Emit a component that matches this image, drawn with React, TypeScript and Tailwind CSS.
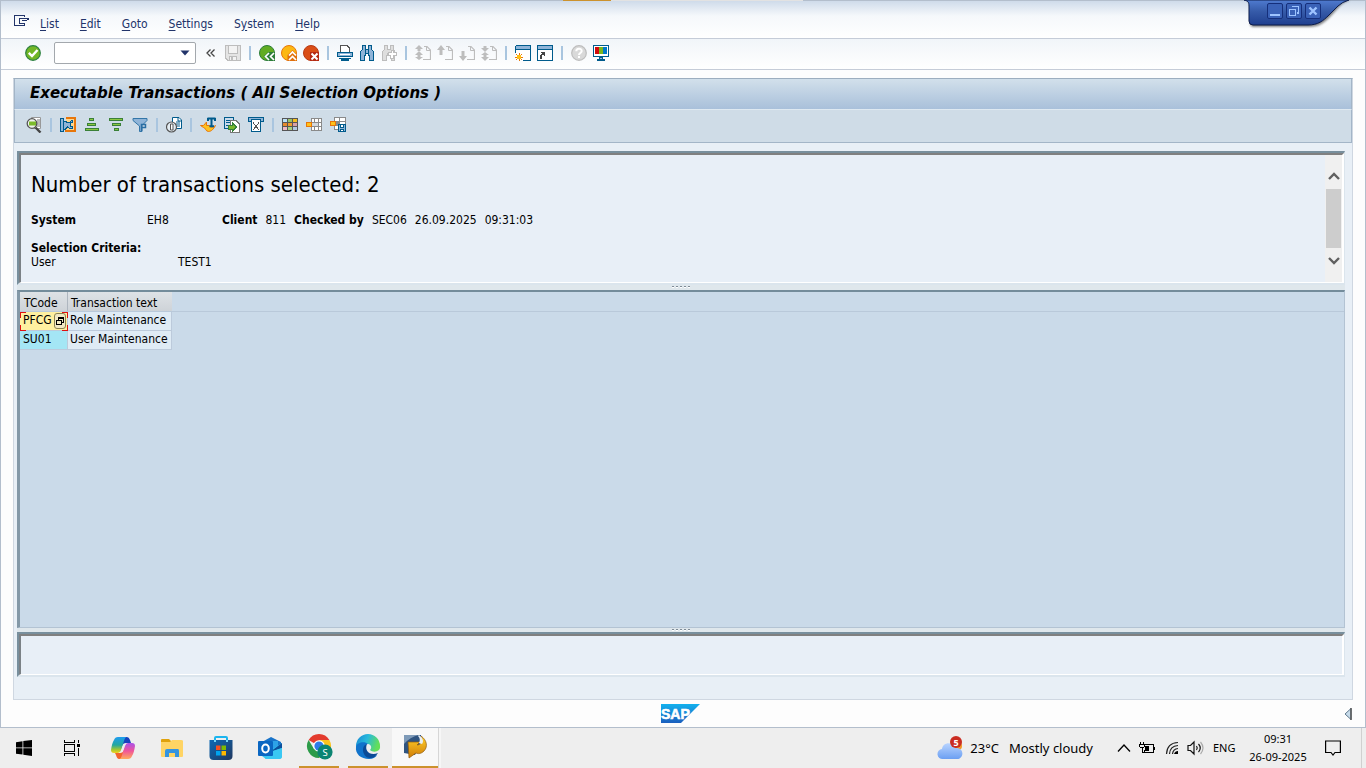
import type { ReactNode } from "react";

const NAVY = "#22346a";
const BLUE = "#005b8c";
const LIGHT = "#8fb4d8";
const GREY = "#bdbdbd";
const ORANGE = "#e8760a";

function Icon({ children, soft = false }: { children: ReactNode; soft?: boolean }) {
  return (
    <svg viewBox="0 0 16 16" className="block size-4" fill="none" shapeRendering={soft ? "auto" : "crispEdges"} aria-hidden="true">
      {children}
    </svg>
  );
}

function Page({ arrows }: { arrows: ReactNode }) {
  return (
    <Icon soft>
      <path d="M9 1.500H12L15.500 5v9.500H8" stroke={GREY} strokeWidth="1.200" />
      <path d="M11.500 1.500V5.500H15.500" stroke={GREY} />
      <g fill={GREY}>{arrows}</g>
    </Icon>
  );
}

type Tool = { label: string; icon: ReactNode } | null;

const standardTools: Tool[] = [
  {
    label: "Save",
    icon: (
      <Icon>
        <path d="M.5 .5H15.500V15.500H3L.5 13Z" fill="#e4e4e4" stroke={GREY} />
        <path d="M3.500 1V8.500H12.500V1M4.500 15V11.500H11.500V15" stroke={GREY} fill="#f3f3f3" />
        <path d="M6 12h2v3H6z" fill={GREY} />
      </Icon>
    ),
  },
  null,
  {
    label: "Back",
    icon: (
      <Icon soft>
        <circle cx="8" cy="8" r="7.500" fill="#62ac22" stroke="#2d7d3a" />
        <path d="M9.500 7 4.500 11.500 9.500 16H16V7z" fill="#2d7d3a" />
        <path d="M10 8 6.500 11.500 10 15M15 8 11.500 11.500 15 15" stroke="#fff" strokeWidth="1.700" />
      </Icon>
    ),
  },
  {
    label: "Exit",
    icon: (
      <Icon soft>
        <circle cx="8" cy="8" r="7.500" fill="#fcb813" stroke="#e8760a" />
        <path d="M6.500 10 11.500 5 16 9.500V16H6.500z" fill="#e0700c" />
        <path d="M8 10.500 11.500 7 15 10.500M8 15 11.500 11.500 15 15" stroke="#fff" strokeWidth="1.700" />
      </Icon>
    ),
  },
  {
    label: "Cancel",
    icon: (
      <Icon soft>
        <circle cx="8" cy="8" r="7.500" fill="#da4e16" stroke="#b83a14" />
        <path d="M7 7h9v9H7z" fill="#b52a12" />
        <path d="M8.500 8.500 14.500 14.500M14.500 8.500 8.500 14.500" stroke="#fff" strokeWidth="2" />
      </Icon>
    ),
  },
  null,
  {
    label: "Print",
    icon: (
      <Icon>
        <path d="M3.500 7V.5H10L12.500 3V7" fill="#fff" stroke="#555" />
        <rect x=".5" y="7.500" width="15" height="4" rx="1" fill={LIGHT} stroke={BLUE} />
        <path d="M3 9h10v1H3z" fill="#fff" />
        <path d="M2 13h12v1H2zM4 14h8v2H4z" fill={BLUE} />
      </Icon>
    ),
  },
  {
    label: "Find",
    icon: (
      <Icon>
        <path d="M3.500 .5h3V4h3V.5h3V4l2 3v8.500h-4V10h-1V8.500h-3V10h-1v5.500h-4V7l2-3Z" fill={LIGHT} stroke={BLUE} />
        <path d="M6 4h1v4H6zM9 4h1v4H9z" fill={BLUE} />
      </Icon>
    ),
  },
  {
    label: "Find next",
    icon: (
      <Icon>
        <path d="M3.500 .5h3V4h3V.5h3V4l1 2v9.500h-3V10h-1V8.500h-3V10h-1v5.500h-4V7l2-3Z" fill="#dedede" stroke={GREY} />
        <path d="M10.500 5.500h2v2h3v3h-3v3h-3v-3h-2v-3h3Z" fill="#fff" stroke={GREY} />
      </Icon>
    ),
  },
  null,
  { label: "First page", icon: <Page arrows={<path d="M4 0l4 4H5.500v2H8l-4 0-4 0h2.500V4H0zM4 6l4 4H5.500v2H8l-4 3-4-3h2.500v-2H0z" />} /> },
  { label: "Previous page", icon: <Page arrows={<path d="M4 0l4 5H5.500v5h-3V5H0z" />} /> },
  { label: "Next page", icon: <Page arrows={<path d="M2.500 6h3v5H8l-4 5-4-5h2.500z" />} /> },
  { label: "Last page", icon: <Page arrows={<path d="M2.500 1h3v2H8L4 7 0 3h2.500zM4 7l4 3H5.500v2H8l-4 4-4-4h2.500v-2H0z" />} /> },
  null,
  {
    label: "New session",
    icon: (
      <Icon>
        <path d="M.5 .5h15v15H8M.5 8V.5" stroke={BLUE} />
        <path d="M1 5h14v10H1z" fill="#fff" />
        <path d="M1 1h14v3H1z" fill={LIGHT} />
        <path d="M0 4h16v1H0z" fill={BLUE} />
        <path d="M4 8v8M0 12h8M1.200 9.200l5.600 5.600M6.800 9.200l-5.600 5.600" stroke={ORANGE} />
        <circle cx="4" cy="12" r="2.200" fill="#ffbf12" />
      </Icon>
    ),
  },
  {
    label: "Create shortcut",
    icon: (
      <Icon>
        <path d="M.5 .5h15v15H.5z" fill="#fff" stroke={BLUE} />
        <path d="M1 1h14v3H1z" fill={LIGHT} />
        <path d="M0 4h16v1H0z" fill={BLUE} />
        <path d="M3.500 14v-3l3-3" stroke="#444" strokeWidth="2" />
        <path d="M3.500 7h4.500V12z" fill="#444" />
      </Icon>
    ),
  },
  null,
  {
    label: "Help",
    icon: (
      <Icon soft>
        <circle cx="8" cy="8" r="7.300" fill="#d9d9d9" stroke={GREY} strokeWidth="1.200" />
        <path d="M5.300 6.200C5.300 3 10.700 3 10.700 6c0 2-2.700 2-2.700 4" stroke="#fff" strokeWidth="2" />
        <path d="M7 11h2v2H7z" fill="#fff" />
      </Icon>
    ),
  },
  {
    label: "Customize layout",
    icon: (
      <Icon>
        <path d="M.5 .5h15v11H.5z" fill="#fff" stroke={BLUE} />
        <path d="M2 2h4v7H2z" fill="#d10a0a" />
        <path d="M6 2h4v7H6z" fill="#7ab61c" />
        <path d="M10 2h4v7h-4z" fill="#0078c8" />
        <path d="M6.500 12h3v2h-3z" fill={LIGHT} stroke={BLUE} />
        <path d="M4 14h8v2H4z" fill={BLUE} />
      </Icon>
    ),
  },
];

const gridCells = [
  [1, 2, "#bcdff5"], [6, 2, "#9ac36a"], [11, 2, "#f5bd1d"],
  [1, 6, "#e8892c"], [6, 6, "#ef9b2d"], [11, 6, "#d9a0a8"],
  [1, 10, "#f0b8c6"], [6, 10, "#a5cf80"], [11, 10, "#b2c8df"],
] as const;

const listTools: Tool[] = [
  {
    label: "Details",
    icon: (
      <Icon soft>
        <path d="M5.500 .5h9v11h-7z" fill="#fff" stroke="#999" />
        <path d="M11 3h3M11 5h3M11 7h3M11 9h3" stroke="#777" />
        <circle cx="6" cy="6.500" r="4.800" fill="#f1f4ef" stroke="#555" strokeWidth="1.300" />
        <path d="M3 4.500h7v4H3z" fill="#7cbb2b" />
        <path d="M9.500 10.500 14.500 15.500" stroke="#444" strokeWidth="2.400" />
      </Icon>
    ),
  },
  null,
  {
    label: "Choose",
    icon: (
      <Icon>
        <path d="M6 1h9v12.500H5" fill="#fcd68f" stroke={ORANGE} strokeWidth="2" />
        <path d="M.5 1.500h3v13h-3z" fill={LIGHT} stroke={BLUE} />
        <path d="M3.500 4.500h2l2 1h2l2-2h1v2h-2v4h2v2h-3l-2-1.500-2 2h-2z" fill={LIGHT} stroke={BLUE} />
      </Icon>
    ),
  },
  {
    label: "Sort ascending",
    icon: (
      <Icon>
        <g fill="#8cc63f" stroke="#3a8038">
          <path d="M5.500 1.500h4v2h-4zM3.500 6.500h8v2h-8zM1.500 11.500h13v2h-13z" />
        </g>
      </Icon>
    ),
  },
  {
    label: "Sort descending",
    icon: (
      <Icon>
        <g fill="#8cc63f" stroke="#3a8038">
          <path d="M1.500 1.500h13v2h-13zM4.500 6.500h8v2h-8zM6.500 11.500h4v2h-4z" />
        </g>
      </Icon>
    ),
  },
  {
    label: "Set filter",
    icon: (
      <Icon soft>
        <path d="M1 1.500h14v2l-5 5v6H7.500V9L1 3.500z" fill={LIGHT} stroke="#3376a8" />
        <path d="M9.500 14V7.500h4v3h-4" stroke="#2a6ea3" strokeWidth="1.500" />
      </Icon>
    ),
  },
  null,
  {
    label: "Print preview",
    icon: (
      <Icon soft>
        <path d="M6.500 .5H13L15.500 3v8.500h-9z" fill="#fff" stroke={BLUE} />
        <path d="M12 1v3h3M10 5h4M10 7h4M11 9h3" stroke={BLUE} />
        <circle cx="5.500" cy="10" r="5" fill="#e4edf3" stroke="#555" strokeWidth="1.200" />
        <path d="M4.500 7H7v6H4.500z" fill="#fff" stroke="#555" />
      </Icon>
    ),
  },
  null,
  {
    label: "Views",
    icon: (
      <Icon soft>
        <path d="M.5 8.500h3l3-3.500v3.500h3c1 3 3 2 6 0-2 3.500-4 6-7 6-3 0-3-4-5-4z" fill="#ffc21f" stroke={ORANGE} />
        <path d="M7.500 1.500H15.500M11.500 1.500V9M9.500 9.200h4.500M8 1v3M15 1v3" stroke={BLUE} strokeWidth="2" />
      </Icon>
    ),
  },
  {
    label: "Local file",
    icon: (
      <Icon>
        <path d="M.5 .5h9v11h-9z" fill="#c9dbec" stroke={BLUE} />
        <path d="M2 3h6M2 5.500h4M2 8.500h3" stroke={BLUE} />
        <path d="M6.500 3.500H12L15.500 7v8.500h-9z" fill="#fff" stroke="#777" />
        <path d="M4 8h4V5.500l4.500 4.500L8 14.500V12H4z" fill="#79b72b" stroke="#35803a" />
      </Icon>
    ),
  },
  {
    label: "Word processing",
    icon: (
      <Icon>
        <path d="M.5 .5h15v4H.5z" fill={LIGHT} stroke={BLUE} />
        <path d="M3.500 3v11.500h9V3" fill="#fff" stroke={BLUE} />
        <path d="M3 2h10v1H3z" fill={BLUE} />
        <path d="M5 5.500 11 13M11 5.500 5 13" stroke="#555" />
      </Icon>
    ),
  },
  null,
  {
    label: "Choose layout",
    icon: (
      <Icon>
        <path d="M0 1h16v13H0z" fill="#555" />
        {gridCells.map(([x, y, color]) => (
          <rect key={`${x}-${y}`} x={x} y={y} width="4" height="3" fill={color} />
        ))}
      </Icon>
    ),
  },
  {
    label: "Change layout",
    icon: (
      <Icon>
        <path d="M5 1h11v13H5z" fill="#8a8a8a" />
        <path d="M6 2h2v3H6zM9 2h3v3H9zM13 2h2v3h-2zM13 6h2v3h-2zM6 10h2v3H6zM9 10h3v3H9zM13 10h2v3h-2z" fill="#fff" />
        <path d="M.5 5.500h5v4h-5z" fill="#ffc21a" stroke={ORANGE} />
        <path d="M6 6h6v3H6z" fill="#d3d8dd" />
      </Icon>
    ),
  },
  {
    label: "Save layout",
    icon: (
      <Icon>
        <path d="M4 0h12v13H4z" fill="#8a8a8a" />
        <path d="M5 1h4v3H5zM10 1h5v3h-5zM10 5h5v2h-5zM5 9h3v3H5z" fill="#fff" />
        <path d="M.5 4.500h5v4h-5z" fill="#ffc21a" stroke={ORANGE} />
        <path d="M8.500 7.500h7v7h-7z" fill={LIGHT} stroke={BLUE} />
        <path d="M10.500 7.500h3v3h-3zM10.500 12.500h3v2h-3z" fill="#fff" stroke={BLUE} />
      </Icon>
    ),
  },
];

function Tools({ tools, gap, sep }: { tools: Tool[]; gap: string; sep: string }) {
  return (
    <div className={`flex items-center ${gap}`}>
      {tools.map((tool, i) =>
        tool ? (
          <button key={i} type="button" aria-label={tool.label} className="size-4">
            {tool.icon}
          </button>
        ) : (
          <span key={i} className={`flex justify-center ${sep}`}>
            <span className="h-3.5 w-0.5 bg-[#a9c5df]" />
          </span>
        ),
      )}
    </div>
  );
}

const menus: [string, string, string][] = [
  ["", "E", "dit"],
  ["", "G", "oto"],
  ["", "S", "ettings"],
  ["S", "y", "stem"],
  ["", "H", "elp"],
];

function WindowControls() {
  const button = "size-4 rounded-[2px] border border-[#152f7b] bg-[#3a62b8]";
  return (
    <div className="absolute top-0 right-3.5 h-8 w-[108px]">
      <svg viewBox="0 0 108 32" className="absolute inset-0 h-8 w-[108px]" aria-hidden="true">
        <defs>
          <linearGradient id="controls" x1="0" y1="0" x2="0" y2="1">
            <stop offset="0" stopColor="#4f7bd0" />
            <stop offset=".45" stopColor="#365ba9" />
            <stop offset="1" stopColor="#1f3f8f" />
          </linearGradient>
          <filter id="drop" x="-10%" y="-10%" width="120%" height="140%">
            <feGaussianBlur stdDeviation="1" />
          </filter>
        </defs>
        <path d="M3 0c3 1 4 3 4 7v16q0 4 4 4h55c10 0 15-4 21-10l9-10q4-5 11-7" fill="#333" opacity=".6" filter="url(#drop)" />
        <path d="M1 0c4 1 5 2 5 6v15q0 4 4 4h55c10 0 15-4 21-10l9-9q4-4 11-6z" fill="url(#controls)" stroke="#0c1c4b" />
      </svg>
      <div className="relative flex gap-[3px] pt-[3px] pl-6">
        <button type="button" aria-label="Minimize" className={button}>
          <svg viewBox="0 0 14 14" className="block size-3.5"><path d="M2 10h10v2H2z" fill="#9ec4ff" /></svg>
        </button>
        <button type="button" aria-label="Restore" className={button}>
          <svg viewBox="0 0 14 14" className="block size-3.5" fill="none" stroke="#9ec4ff" strokeWidth="1.500" shapeRendering="crispEdges">
            <path d="M2.500 5.500h6v6h-6zM5 2.500h6.500V9H10" />
            <path d="M2 5h7v1H2zM5 2h7v1H5z" fill="#9ec4ff" stroke="none" />
          </svg>
        </button>
        <button type="button" aria-label="Close" className={button}>
          <svg viewBox="0 0 14 14" className="block size-3.5"><path d="M3.500 3.500l7 7M10.500 3.500l-7 7" stroke="#9ec4ff" strokeWidth="2.400" /></svg>
        </button>
      </div>
    </div>
  );
}

function Panel({ children, className }: { children?: ReactNode; className: string }) {
  return (
    <section className={`flex shrink-0 border-2 border-r border-t-[#788f9d] border-r-[#dbe5ed] border-b-[#dbe5ed] border-l-[#788f9d] ${className}`}>
      <div className="flex flex-1 border-2 border-b border-t-[#808080] border-r-white border-b-white border-l-[#7b8186] bg-[#e8eff7]">{children}</div>
    </section>
  );
}

function Splitter({ height }: { height: string }) {
  return (
    <div className={`flex shrink-0 items-start justify-center bg-[#dfe7ec] pt-px ${height}`}>
      <div className="flex gap-0.5">
        {[0, 1, 2, 3, 4].map((n) => (
          <span key={n} className="h-0.5 w-0.5 border-b border-white bg-[#7f8b96]" />
        ))}
      </div>
    </div>
  );
}

const rows = [
  { code: "PFCG", text: "Role Maintenance", active: true },
  { code: "SU01", text: "User Maintenance", active: false },
];

function ResultList() {
  return (
    <div className="flex-1 bg-[#cadae9]">
      <div className="h-px translate-y-[19px] bg-[#b9c9da]" />
      <table className="-mt-px border-separate border-spacing-0 text-left">
        <thead>
          <tr className="h-5">
            <th className="w-12 border-r border-b border-[#b5c2cf] border-r-[#aeb6bf] bg-linear-to-b from-[#dee2e6] to-[#ced3d8] p-0 pt-0.5 pl-1 font-normal">TCode</th>
            <th className="w-26 border-b border-[#b5c2cf] bg-linear-to-b from-[#dee2e6] to-[#ced3d8] p-0 pt-0.5 pl-[3px] font-normal">Transaction text</th>
          </tr>
        </thead>
        <tbody>
          {rows.map((row) => (
            <tr key={row.code} className="h-[19px]">
              <td className={`border-r border-b border-[#bccadb] p-0 pl-[3px] ${row.active ? "relative bg-[#fff0a0]" : "bg-[#a4e6f5]"}`}>
                <div className="flex h-[18px] items-center justify-between">
                  <span className="pb-0.5">{row.code}</span>
                  {row.active && (
                    <>
                      <button type="button" aria-label="Possible entries" className="mr-px flex h-4 w-3 items-center justify-center rounded-[3px] border border-[#8b8250] bg-[#f2e9c4]">
                        <svg viewBox="0 0 10 10" className="size-2.5 shrink-0" fill="none" stroke="#000" shapeRendering="crispEdges">
                          <path d="M1.500 4.500h5v4h-5zM3.500 4V1.500h5v5H7M1 4h6M3 2h6" />
                        </svg>
                      </button>
                      <svg viewBox="0 0 48 19" className="pointer-events-none absolute top-0 left-0 h-[19px] w-12" fill="none" stroke="#e01010" shapeRendering="crispEdges">
                        <path d="M.5 6V.5H6M42 .5h5.500V6M.5 13v5.500H6M42 18.500h5.500V13" />
                      </svg>
                    </>
                  )}
                </div>
              </td>
              <td className="border-r border-b border-[#bccadb] bg-[#dfebf5] p-0 pb-0.5 pl-0.5">{row.text}</td>
            </tr>
          ))}
        </tbody>
      </table>
    </div>
  );
}

function AppButton({ label, open = false, active = false, children }: { label: string; open?: boolean; active?: boolean; children: ReactNode }) {
  return (
    <button type="button" aria-label={label} className={`flex h-10 flex-col items-center ${active ? "w-[46px] bg-[#f8f8f8]" : "w-[49px]"}`}>
      <span className="flex flex-1 items-center">{children}</span>
      {open && <span className={`h-0.5 bg-[#cc922d] ${active ? "w-full" : "w-10"}`} />}
    </button>
  );
}

function Taskbar() {
  const svg = "block size-6.5";
  return (
    <footer className="flex h-10 shrink-0 items-center bg-[#eeeeee] font-['Noto_Sans',sans-serif] text-black">
      <button type="button" aria-label="Start" className="flex w-12 justify-center">
        <svg viewBox="0 0 16 16" className="size-4"><path d="M0 2.200 6.500 1.200V7.500H0zM7.300 1.100 16 0v7.500H7.300zM0 8.300h6.500v6.300L0 13.700zM7.300 8.300H16V16l-8.700-1.300z" /></svg>
      </button>
      <button type="button" aria-label="Task view" className="mr-0.5 flex w-12 justify-center">
        <svg viewBox="0 0 16 16" className="size-4" fill="none" stroke="#000" shapeRendering="crispEdges">
          <path d="M.5 0v2.500h10V0M.5 4.500h10v7H.5zM.5 16v-2.500h10V16M14.500 0v3M14.500 8v8" />
          <path d="M13 4h3v3h-3z" fill="#000" stroke="none" />
        </svg>
      </button>
      <AppButton label="Copilot">
        <svg viewBox="0 0 26 26" className={svg}>
          <defs>
            <linearGradient id="cpa" x1="0" y1="0" x2="0" y2="1"><stop stopColor="#1e9bf0" /><stop offset=".5" stopColor="#22a7a0" /><stop offset=".8" stopColor="#a6c82e" /><stop offset="1" stopColor="#f3d020" /></linearGradient>
            <linearGradient id="cpb" x1="0" y1="0" x2="0" y2="1"><stop stopColor="#a952ea" /><stop offset=".5" stopColor="#f0559a" /><stop offset="1" stopColor="#ffab5c" /></linearGradient>
          </defs>
          <path d="M13 2h4q2 0 3 3l1 3h-5q-3 0-4 3l-2 6z" fill="#1743bd" />
          <path d="M13 24H9q-2 0-3-4l-1-2h5q3 0 4-3l3-7z" fill="#f2632c" />
          <path d="M8 2h9q-2 0-3 4l-3 9q-1 3-3 3H4q-3 0-3-3Q2 8 4 5q1-3 4-3z" fill="url(#cpa)" />
          <path d="M18 24H9q2 0 3-4l3-9q1-3 3-3h4q3 0 3 3-1 7-3 10-1 3-4 3z" fill="url(#cpb)" />
        </svg>
      </AppButton>
      <AppButton label="File Explorer">
        <svg viewBox="0 0 26 26" className={svg}>
          <path d="M2 5q0-1 1-1h7l2 2v3H2z" fill="#e0a20c" />
          <path d="M2 7h9l2-2h9q2 0 2 1v15q0 1-1 1H3q-1 0-1-1z" fill="#ffd464" />
          <path d="M6 22v-6q0-2 2-2h11q1 0 1 2v6h-4v-4h-6v4z" fill="#3594df" />
        </svg>
      </AppButton>
      <AppButton label="Microsoft Store">
        <svg viewBox="0 0 26 26" className={svg}>
          <defs><linearGradient id="store" x1="0" y1="0" x2="1" y2="1"><stop stopColor="#0b69b6" /><stop offset="1" stopColor="#21385f" /></linearGradient></defs>
          <path d="M7 8V3q0-1 1-1h10q1 0 1 1v5" fill="none" stroke="#1bb5ef" strokeWidth="2" />
          <path d="M1.500 5h23v16q0 4-4 4h-15q-4 0-4-4z" fill="url(#store)" />
          <path d="M7 5v2M19 5v2" stroke="#6fd4f8" strokeWidth="2" />
          <path d="M8 10.500h4.500V15H8z" fill="#f25022" /><path d="M13.500 10.500H18V15h-4.500z" fill="#7fba00" />
          <path d="M8 16h4.500v4.500H8z" fill="#00a4ef" /><path d="M13.500 16H18v4.500h-4.500z" fill="#ffb900" />
        </svg>
      </AppButton>
      <AppButton label="Outlook">
        <svg viewBox="0 0 26 26" className={svg}>
          <path d="M5 7 14 2l10 5v7H5z" fill="#1873c9" />
          <path d="M8 6h13v10H8z" fill="#2da2e8" />
          <path d="M25 8v13q0 3-3 3H9l-4-3z" fill="#35c5f2" />
          <path d="M25 8 13 17l12-4z" fill="#0c4f9c" /><path d="M13 17 25 13v8q0 3-3 3H8z" fill="#3ac8f3" />
          <rect x="1" y="6" width="15" height="15" rx="1" fill="#0a66c2" />
          <ellipse cx="8.500" cy="13.500" rx="3.300" ry="3.900" fill="none" stroke="#fff" strokeWidth="2" />
        </svg>
      </AppButton>
      <AppButton label="Google Chrome" open>
        <svg viewBox="0 0 28 28" className="block size-7">
          <path d="M14 13 3.600 7A12 12 0 0 1 24.400 7z" fill="#e33b2e" />
          <path d="M14 13V7h10.400A12 12 0 0 1 14 25l5-9z" fill="#fcc31e" />
          <path d="M14 13 9 16 3.600 7A12 12 0 0 0 14 25l5-9z" fill="#2c9b48" />
          <circle cx="14" cy="13" r="5.800" fill="#fff" /><circle cx="14" cy="13" r="4.600" fill="#2e7be8" />
          <circle cx="20" cy="19" r="7.600" fill="#0b8472" />
          <text x="20" y="22.500" fontSize="9.500" textAnchor="middle" fill="#fff">S</text>
        </svg>
      </AppButton>
      <AppButton label="Microsoft Edge" open>
        <svg viewBox="0 0 26 26" className={svg}>
          <defs>
            <linearGradient id="edgeTop" x1="0" y1="0" x2="1" y2=".3"><stop stopColor="#1687d4" /><stop offset=".5" stopColor="#28b9dc" /><stop offset="1" stopColor="#63df59" /></linearGradient>
          </defs>
          <path d="M1 12a12 12 0 0 1 24 0c1 6-7 7-10 4 3-3 0-7-5-6Q4 9 1 16z" fill="url(#edgeTop)" />
          <path d="M1 13c1-5 9-6 12-3-6 1-6 13 7 12q3-1 3-2-3 5-9 5C6 25 0 20 1 13z" fill="#1173cb" />
          <path d="M12 10c-7 2-4 14 3 14 4 0 6-2 8-5-8 3-14-2-11-9z" fill="#0b4a96" />
        </svg>
      </AppButton>
      <AppButton label="SAP Logon" open active>
        <svg viewBox="0 0 26 26" className={svg}>
          <defs><linearGradient id="logon" x1="0" y1="0" x2="0" y2="1"><stop stopColor="#ffd02a" /><stop offset="1" stopColor="#d07c06" /></linearGradient></defs>
          <path d="M2 1h17v6l-6 14-11-2z" fill="#2f5480" />
          <path d="M2 1h15Q8 3 2 10z" fill="#7e9ab8" />
          <path d="M6 8h12l-3 3c5 0 6-5 4-9 6 4 7 11 3 15-3 3-6 3-8 2l-7 5z" fill="url(#logon)" stroke="#8f5a0c" strokeWidth=".7" />
          <path d="M17 1c4 3 5 6 3 9l-3-1q2-4-1-7z" fill="#e8eef2" />
        </svg>
      </AppButton>
      <span className="h-10 w-[3px] border-l border-[#d6d6d6] bg-[#f6f6f6]" />
      <div className="ml-auto flex items-center">
        <a href="#weather" className="flex items-center text-[13px] leading-5">
          <svg viewBox="0 0 26 26" className="mr-[7px] size-6.5">
            <defs><linearGradient id="cloud" x1="0" y1="0" x2="0" y2="1"><stop stopColor="#b9d4ff" /><stop offset="1" stopColor="#6b9ff2" /></linearGradient></defs>
            <circle cx="21" cy="11" r="4" fill="#f39a28" />
            <path d="M6 24a5 5 0 0 1-1-10C6 7 15 6 18 13c10-1 9 11 2 11z" fill="url(#cloud)" />
            <circle cx="19" cy="7" r="6" fill="#ca2d22" />
            <text x="19" y="10.500" fontSize="9" fontWeight="bold" textAnchor="middle" fill="#fff">5</text>
          </svg>
          <span>23°C</span>
          <span className="ml-2.5">Mostly cloudy</span>
        </a>
        <button type="button" aria-label="Show hidden icons" className="ml-6">
          <svg viewBox="0 0 14 10" className="block h-2.5 w-3.5" fill="none" stroke="#000" strokeWidth="1.300"><path d="M1 8.500 7 2l6 6.500" /></svg>
        </button>
        <svg viewBox="0 0 16 12" className="ml-2 h-3 w-4" fill="none" stroke="#000" shapeRendering="crispEdges" role="img" aria-label="Battery">
          <path d="M6 2.500h8.500v8H5.500V8M15.500 5v3M1.500 0v2M4.500 0v2M.5 2.500h5v2l-1 1h-3l-1-1zM3.500 6v4.500h2" />
          <path d="M6 4h4v5H6z" fill="#000" stroke="none" />
        </svg>
        <svg viewBox="0 0 16 16" className="ml-2.5 size-4" fill="none" stroke="#222" strokeWidth="1.200" role="img" aria-label="Network">
          <path d="M1.500 14Q2 3 13 2.500M4.500 14Q5 6 13 5.500M7.500 14Q8 9 13 8.500" />
          <path d="M9 14q1-3 4-3v3z" fill="#000" stroke="none" />
        </svg>
        <svg viewBox="0 0 18 16" className="ml-1.5 h-4 w-4.5" fill="none" stroke="#111" strokeWidth="1.200" role="img" aria-label="Volume">
          <path d="M1 5.500h2.500L7 2v12l-3.500-3.500H1zM9.500 6q1.500 2 0 4M11.500 4q3.500 4 0 8" />
          <path d="M13.500 2q5 6 0 12" stroke="#aaa" />
        </svg>
        <span className="ml-2 w-6 text-[11px] leading-4">ENG</span>
        <time className="ml-2.5 flex w-[62px] flex-col text-center text-[11px] leading-[18px] whitespace-nowrap">
          <span>09:31</span>
          <span>26-09-2025</span>
        </time>
        <button type="button" aria-label="Notifications" className="mr-5 ml-4">
          <svg viewBox="0 0 16 16" className="block size-4" fill="none" stroke="#000" strokeWidth="1.200"><path d="M.6 1h14.800v11.500H10L8 15l-2-2.500H.6z" /></svg>
        </button>
        <span className="h-10 w-px bg-[#d0d0d0]" />
        <span className="w-1" />
      </div>
    </footer>
  );
}

export default function App() {
  return (
    <div className="flex min-h-screen flex-col bg-white font-['DejaVu_Sans_Condensed','DejaVu_Sans',sans-serif] text-[12px] leading-[14px] text-black">
      <main className="relative flex flex-1 flex-col border-x border-b border-[#b3becc] bg-[#fdfdfd]">
        <div className="flex h-px bg-[#b3becc]">
          <span className="ml-[41.2%] h-px w-12 bg-[#cc922d]" />
          <span className="h-px w-48 bg-[#e2e2e2]" />
        </div>
        <nav aria-label="Menu" className="flex h-[38px] items-center gap-[21px] border-b border-[#c5ccd8] bg-linear-to-b from-[#cfdbea] via-[#f5f8fb] via-40% to-white pt-2 pl-[13px] text-[#22346a]">
          <div className="flex items-center gap-[11px]">
            <button type="button" aria-label="Window menu" className="mb-1.5">
              <svg viewBox="0 0 15 12" className="block h-3 w-[15px]" fill="none" stroke={NAVY} shapeRendering="crispEdges">
                <path d="M10.500 2V.5H.5v10h10V9M5.500 3.500H15M5.500 3v5H11M8 5.500h4M14.500 4l-3 2" />
              </svg>
            </button>
            <button type="button"><u className="underline-offset-2">L</u>ist</button>
          </div>
          {menus.map(([before, key, after]) => (
            <button key={key} type="button">
              {before}
              <u className="underline-offset-2">{key}</u>
              {after}
            </button>
          ))}
        </nav>
        <WindowControls />
        <div className="flex h-[31px] items-center border-b border-[#c5ccd8] bg-linear-to-b from-[#f1f5f9] to-white pb-0.5 pl-6">
          <button type="button" aria-label="Enter">
            <Icon soft>
              <circle cx="8" cy="8" r="7.300" fill="#72b626" stroke="#2c8040" strokeWidth="1.200" />
              <path d="M3.800 7.800 7 11l5.500-6" stroke="#fff" strokeWidth="2.400" />
            </Icon>
          </button>
          <div className="ml-[13px] flex h-[22px] w-[142px] items-center rounded-[2px] border border-[#a3a8ad] bg-white">
            <input aria-label="Command" className="h-full min-w-0 flex-1 px-1 outline-none" />
            <button type="button" aria-label="Command history" className="px-[5px]">
              <svg viewBox="0 0 10 6" className="block h-1.5 w-2.5"><path d="M.5 .5h9L5 5.500z" fill={NAVY} /></svg>
            </button>
          </div>
          <button type="button" aria-label="Hide command field" className="mr-[9px] ml-2.5">
            <svg viewBox="0 0 10 10" className="block size-2.5" fill="none" stroke="#444" strokeWidth="1.300"><path d="M4.500 1.500 1 5l3.500 3.500M8.500 1.500 5 5l3.500 3.500" /></svg>
          </button>
          <Tools tools={standardTools} gap="gap-1.5" sep="w-1.5" />
        </div>

        <div className="mx-3 mt-2 flex flex-1 flex-col border border-[#cfd7e1] border-t-[#9daebf] bg-[#e8eff6]">
          <header className="flex h-[31px] items-center border-x border-b border-[#a3b5c7] border-b-[#dfe9f1] bg-linear-to-b from-[#d2e0eb] to-[#a9c0da] pb-[3px] pl-[15px]">
            <h1 className="font-['DejaVu_Sans',sans-serif] text-[15px] leading-5 font-bold italic">Executable Transactions ( All Selection Options )</h1>
          </header>
          <div className="flex h-[33px] items-center border-x border-b border-[#a3b5c7] bg-[#cfdce7] pb-[3px] pl-[11px]">
            <Tools tools={listTools} gap="gap-2" sep="w-0.5" />
          </div>
          <div className="flex flex-1 flex-col pt-2 pr-[7px] pb-[22px] pl-[3px]">
            <Panel className="h-[134px]">
              <div className="flex-1 pt-4 pl-2.5">
                <h2 className="text-[22px] leading-7">Number of transactions selected: 2</h2>
                <div className="mt-3.5 flex gap-2">
                  <b className="w-[108px]">System</b>
                  <span className="w-[67px]">EH8</span>
                  <b>Client</b>
                  <span>811</span>
                  <b>Checked by</b>
                  <span>SEC06</span>
                  <span>26.09.2025</span>
                  <span>09:31:03</span>
                </div>
                <h3 className="mt-3.5 font-bold">Selection Criteria:</h3>
                <div className="flex">
                  <span className="w-[147px]">User</span>
                  <span>TEST1</span>
                </div>
              </div>
              <div className="flex w-[17px] flex-col items-center bg-[#f0f0f0] pt-4">
                <button type="button" aria-label="Scroll up">
                  <svg viewBox="0 0 12 10" className="block h-2.5 w-3" fill="none" stroke="#606060" strokeWidth="2.400"><path d="M1 8l5-5 5 5" /></svg>
                </button>
                <span className="mt-2 h-[59px] w-[15px] bg-[#cdcdcd]" />
                <button type="button" aria-label="Scroll down" className="mt-2">
                  <svg viewBox="0 0 12 10" className="block h-2.5 w-3" fill="none" stroke="#606060" strokeWidth="2.400"><path d="M1 2l5 5 5-5" /></svg>
                </button>
              </div>
            </Panel>
            <Splitter height="h-[5px]" />
            <section className="flex flex-1 flex-col border-t-2 border-r border-b border-l-[3px] border-t-[#748c9b] border-r-[#b3c3d3] border-b-[#b3c3d3] border-l-[#8398a7]">
              <ResultList />
            </section>
            <Splitter height="h-1" />
            <Panel className="h-[45px]" />
          </div>
        </div>

        <div className="flex h-[27px] items-center pr-[13px]">
          <span className="flex-1" />
          <svg viewBox="0 0 40 20" className="ml-[9px] h-5 w-10" role="img" aria-label="SAP">
            <defs><linearGradient id="sap" x1="0" y1="0" x2="0" y2="1"><stop stopColor="#12b1ee" /><stop offset="1" stopColor="#1b5fbe" /></linearGradient></defs>
            <path d="M0 0h39L20 19H0z" fill="url(#sap)" />
            <text x="0" y="15" fontSize="14" fontWeight="bold" fill="#fff" stroke="#fff" strokeWidth=".6" className="font-['Liberation_Sans',sans-serif]">SAP</text>
          </svg>
          <span className="flex flex-1 justify-end">
            <button type="button" aria-label="Expand status bar">
              <svg viewBox="0 0 8 12" className="block h-3 w-2"><path d="M7 .5v11L1 6z" fill="#c7dbea" stroke="#60788c" /><path d="M7 0v12" stroke="#555" strokeWidth="1.500" /></svg>
            </button>
          </span>
        </div>
      </main>
      <Taskbar />
    </div>
  );
}
